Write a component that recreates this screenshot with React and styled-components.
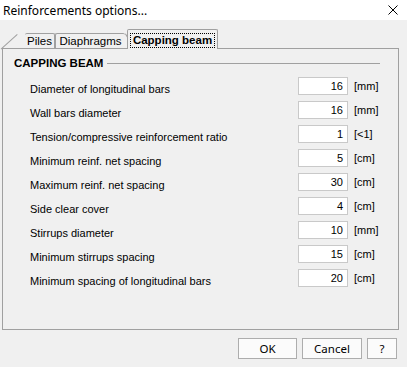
import React from "react";
import styled, { createGlobalStyle } from "styled-components";

const Global = createGlobalStyle`
  html, body { margin: 0; padding: 0; background: #f0f0f0; }
  body { font-family: "Liberation Sans", Arial, sans-serif; font-size: 11px; color: #000; }
`;

const Window = styled.div`
  width: 407px;
  height: 367px;
  display: flex;
  flex-direction: column;
  background: #f0f0f0;
  overflow: hidden;
`;

const TitleBar = styled.div`
  height: 20px;
  background: #fff;
  display: flex;
  align-items: center;
  justify-content: space-between;
  padding: 0 9px 0 3px;
  font-family: "Noto Sans", "Open Sans", sans-serif;
  font-size: 12px;
  color: #000;
`;

const Close = styled.svg`
  width: 10px;
  height: 10px;
  display: block;
`;

const Body = styled.div`
  display: flex;
  flex-direction: column;
  padding: 9px 8px 0 2px;
`;

const TabRow = styled.div`
  display: flex;
  align-items: flex-end;
  height: 19px;
  padding-left: 23px;
  position: relative;
  z-index: 2;
`;

const Tab = styled.div`
  position: relative;
  box-sizing: border-box;
  height: ${(p) => (p.$active ? "20px" : "15px")};
  margin-bottom: ${(p) => (p.$active ? "-1px" : "0")};
  width: ${(p) => p.$w}px;
  border: 1px solid #a0a0a0;
  border-bottom: none;
  border-radius: 2px 2px 0 0;
  background: #f0f0f0;
  display: flex;
  align-items: center;
  justify-content: center;
  font-weight: ${(p) => (p.$active ? "bold" : "normal")};
  font-size: ${(p) => (p.$active ? "11.5px" : "11.5px")};
  z-index: ${(p) => (p.$active ? 3 : 1)};
  margin-left: ${(p) => p.$ml || 0}px;
  padding-top: ${(p) => (p.$active ? "2px" : "0")};
  ${(p) =>
    p.$slantLeft &&
    `
    border-left: none;
    &::before {
      content: "";
      position: absolute;
      left: -8px;
      top: 0;
      width: 1px;
      height: 22px;
      background: #a0a0a0;
      transform: rotate(48deg);
      transform-origin: top left;
    }
  `}
  ${(p) =>
    p.$slantRight &&
    `
    border-right: none;
    &::after {
      content: "";
      position: absolute;
      right: -1px;
      top: 0;
      width: 1px;
      height: 15px;
      background: #a0a0a0;
      transform: rotate(-30deg);
      transform-origin: top left;
    }
  `}
`;

const FocusLabel = styled.span`
  outline: 1px dotted #000;
  padding: 0 2px;
  line-height: 13px;
`;

const Panel = styled.div`
  box-sizing: border-box;
  height: 282px;
  border: 1px solid #a0a0a0;
  display: flex;
  flex-direction: column;
  padding: 7px 18px 0 11px;
  position: relative;
  z-index: 1;
`;

const SectionHeader = styled.div`
  display: flex;
  align-items: center;
  gap: 4px;
  height: 14px;
  font-weight: bold;
  font-size: 11.5px;
  &::after {
    content: "";
    flex: 1;
    height: 1px;
    background: #a0a0a0;
    margin-top: 1px;
  }
`;

const Rows = styled.div`
  display: flex;
  flex-direction: column;
  gap: 6px;
  margin-top: 7px;
  padding-left: 16px;
`;

const Row = styled.div`
  display: grid;
  grid-template-columns: 262px 50px auto;
  column-gap: 6px;
  height: 18px;
`;

const Label = styled.div`
  padding-top: 5px;
  line-height: 14px;
  white-space: nowrap;
`;

const ValueBox = styled.div`
  box-sizing: border-box;
  height: 18px;
  background: #fff;
  border: 1px solid #c9c9c9;
  text-align: right;
  padding-right: 4px;
  line-height: 16px;
`;

const Unit = styled.div`
  line-height: 18px;
`;

const Buttons = styled.div`
  display: flex;
  justify-content: flex-end;
  gap: 5px;
  margin-top: 8px;
  padding-right: 2px;
`;

const Button = styled.div`
  box-sizing: border-box;
  width: ${(p) => p.$w}px;
  height: 21px;
  border: 1px solid #adadad;
  background: #fbfbfb;
  display: flex;
  align-items: center;
  justify-content: center;
  font-family: "Noto Sans", "Open Sans", sans-serif;
  font-size: 11.5px;
`;

const rows = [
  ["Diameter of longitudinal bars", "16", "[mm]"],
  ["Wall bars diameter", "16", "[mm]"],
  ["Tension/compressive reinforcement ratio", "1", "[<1]"],
  ["Minimum reinf. net spacing", "5", "[cm]"],
  ["Maximum reinf. net spacing", "30", "[cm]"],
  ["Side clear cover", "4", "[cm]"],
  ["Stirrups diameter", "10", "[mm]"],
  ["Minimum stirrups spacing", "15", "[cm]"],
  ["Minimum spacing of longitudinal bars", "20", "[cm]"],
];

export default function App() {
  return (
    <Window>
      <Global />
      <TitleBar>
        <span>Reinforcements options...</span>
        <Close viewBox="0 0 10 10">
          <path d="M0.5 0.5 L9.5 9.5 M9.5 0.5 L0.5 9.5" stroke="#000" strokeWidth="1" fill="none" />
        </Close>
      </TitleBar>
      <Body>
        <TabRow>
          <Tab $w={30} $slantLeft>Piles</Tab>
          <Tab $w={70} $slantRight>Diaphragms</Tab>
          <Tab $w={91} $active $ml={2}>
            <FocusLabel>Capping beam</FocusLabel>
          </Tab>
        </TabRow>
        <Panel>
          <SectionHeader>CAPPING BEAM</SectionHeader>
          <Rows>
            {rows.map(([l, v, u]) => (
              <Row key={l}>
                <Label>{l}</Label>
                <ValueBox>{v}</ValueBox>
                <Unit>{u}</Unit>
              </Row>
            ))}
          </Rows>
        </Panel>
        <Buttons>
          <Button $w={59}>OK</Button>
          <Button $w={60}>Cancel</Button>
          <Button $w={30}>?</Button>
        </Buttons>
      </Body>
    </Window>
  );
}
